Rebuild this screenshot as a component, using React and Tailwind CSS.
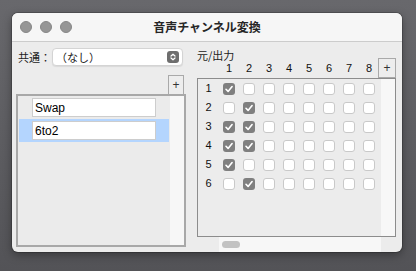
import React from "react";

const JP = { fontFamily: '"Noto Sans CJK JP", "Noto Sans", sans-serif' };
const LS = { fontFamily: '"Liberation Sans", Arial, sans-serif' };

const checks = [
  [1, 0, 0, 0, 0, 0, 0, 0],
  [0, 1, 0, 0, 0, 0, 0, 0],
  [1, 1, 0, 0, 0, 0, 0, 0],
  [1, 1, 0, 0, 0, 0, 0, 0],
  [1, 0, 0, 0, 0, 0, 0, 0],
  [0, 1, 0, 0, 0, 0, 0, 0],
];

function Box({ on }) {
  if (on) {
    return (
      <div className="w-[12px] h-[12px] rounded-[3px] bg-[#7f7f7f] flex items-center justify-center">
        <svg width="12" height="12" viewBox="0 0 12 12">
          <path d="M3 6.3 L5.1 8.4 L9.1 3.5" fill="none" stroke="#ffffff" strokeWidth="1.6" strokeLinecap="round" strokeLinejoin="round" />
        </svg>
      </div>
    );
  }
  return <div className="w-[12px] h-[12px] rounded-[3px] bg-white border border-[#c9c9c9]" />;
}

function PlusBox({ w }) {
  return (
    <div className={`${w} h-[20px] border border-[#a9a9a9] bg-[#ededed] flex items-center justify-center text-[12px] leading-none text-[#333]`} style={LS}>
      +
    </div>
  );
}

export default function App() {
  return (
    <div className="w-[416px] h-[271px] overflow-hidden bg-gradient-to-b from-[#68686c] to-[#535357] pt-[13px] pl-[12px]">
      <div className="w-[390px] h-[239px] rounded-[6px] bg-[#ececec] overflow-hidden flex flex-col shadow-[0_0_0_1px_rgba(0,0,0,0.18),0_3px_10px_rgba(0,0,0,0.35)]">
        {/* title bar */}
        <div className="h-[29px] shrink-0 bg-[#f6f6f6] border-b border-[#cccccc] flex items-center relative">
          <div className="flex gap-[8px] pl-[8px]">
            <div className="w-[12px] h-[12px] rounded-full bg-[#969696] border border-[#878787]" />
            <div className="w-[12px] h-[12px] rounded-full bg-[#969696] border border-[#878787]" />
            <div className="w-[12px] h-[12px] rounded-full bg-[#969696] border border-[#878787]" />
          </div>
          <div className="absolute inset-0 flex items-center justify-center text-[12px] font-bold text-[#262626]" style={JP}>
            音声チャンネル変換
          </div>
        </div>

        {/* body */}
        <div className="flex flex-1">
          {/* left column */}
          <div className="w-[185px] shrink-0 flex flex-col pl-[4px]">
            <div className="mt-[6px] h-[18px] flex items-center pl-[2px]">
              <div className="w-[34px] text-[11px] text-[#222]" style={JP}>共通：</div>
              <div className="w-[131px] h-[18px] rounded-[4px] bg-white border border-[#d4d4d4] shadow-[0_1px_1px_rgba(0,0,0,0.08)] flex items-center pl-[3px] pr-[3px]">
                <div className="flex-1 text-[11px] text-[#222]" style={JP}>（なし）</div>
                <div className="w-[12px] h-[12px] rounded-[3px] bg-[#6e6e6e] flex items-center justify-center">
                  <svg width="12" height="12" viewBox="0 0 12 12">
                    <path d="M4 5 L6 3.2 L8 5" fill="none" stroke="#fff" strokeWidth="1.2" strokeLinecap="round" strokeLinejoin="round" />
                    <path d="M4 7 L6 8.8 L8 7" fill="none" stroke="#fff" strokeWidth="1.2" strokeLinecap="round" strokeLinejoin="round" />
                  </svg>
                </div>
              </div>
            </div>
            <div className="mt-[9px] ml-[152px]">
              <PlusBox w="w-[16px]" />
            </div>
            <div className="-mt-[1px] w-[170px] h-[153px] border-2 border-[#a8a8a8] bg-[#ebebeb] flex">
              <div className="flex-1 flex flex-col pt-0">
                <div className="h-[23px] flex items-center pl-[14px]">
                  <div className="w-[124px] h-[19px] bg-white border border-[#cdcdcd] flex items-center pl-[2px] text-[12px] text-black" style={LS}>
                    Swap
                  </div>
                </div>
                <div className="h-[23px] mx-[1px] bg-[#b4d5fe] flex items-center pl-[13px]">
                  <div className="w-[124px] h-[19px] bg-white border border-[#cdcdcd] flex items-center pl-[2px] text-[12px] text-black" style={LS}>
                    6to2
                  </div>
                </div>
              </div>
              <div className="w-[14px] bg-[#f7f7f7]" />
            </div>
          </div>

          {/* right column */}
          <div className="flex-1 flex flex-col pr-[6px]">
            <div className="pt-[8px] h-[18px] text-[11px] leading-[10px] text-[#222]" style={JP}>元/出力</div>
            <div className="-mt-[2px] h-[20px] flex items-center">
              <div className="w-[22px]" />
              {[1, 2, 3, 4, 5, 6, 7, 8].map((n) => (
                <div key={n} className="w-[20px] text-center text-[11px] text-[#111]" style={LS}>
                  {n}
                </div>
              ))}
              <div className="-ml-[1px]">
                <PlusBox w="w-[18px]" />
              </div>
            </div>
            <div className="h-[159px] border border-[#8c8c8c] flex">
              <div className="flex-1 flex flex-col">
                {checks.map((row, i) => (
                  <div key={i} className="h-[19px] flex items-center">
                    <div className="w-[21px] text-center text-[11px] text-[#111]" style={LS}>
                      {i + 1}
                    </div>
                    {row.map((c, j) => (
                      <div key={j} className="w-[20px] flex justify-center">
                        <Box on={!!c} />
                      </div>
                    ))}
                  </div>
                ))}
              </div>
              <div className="w-[14px] bg-[#f7f7f7]" />
            </div>
            <div className="ml-[22px] w-[162px] h-[15px] bg-[#f7f7f7] pt-[4px] pl-[3px]">
              <div className="w-[18px] h-[7px] rounded-full bg-[#c2c2c2]" />
            </div>
          </div>
        </div>
      </div>
    </div>
  );
}
